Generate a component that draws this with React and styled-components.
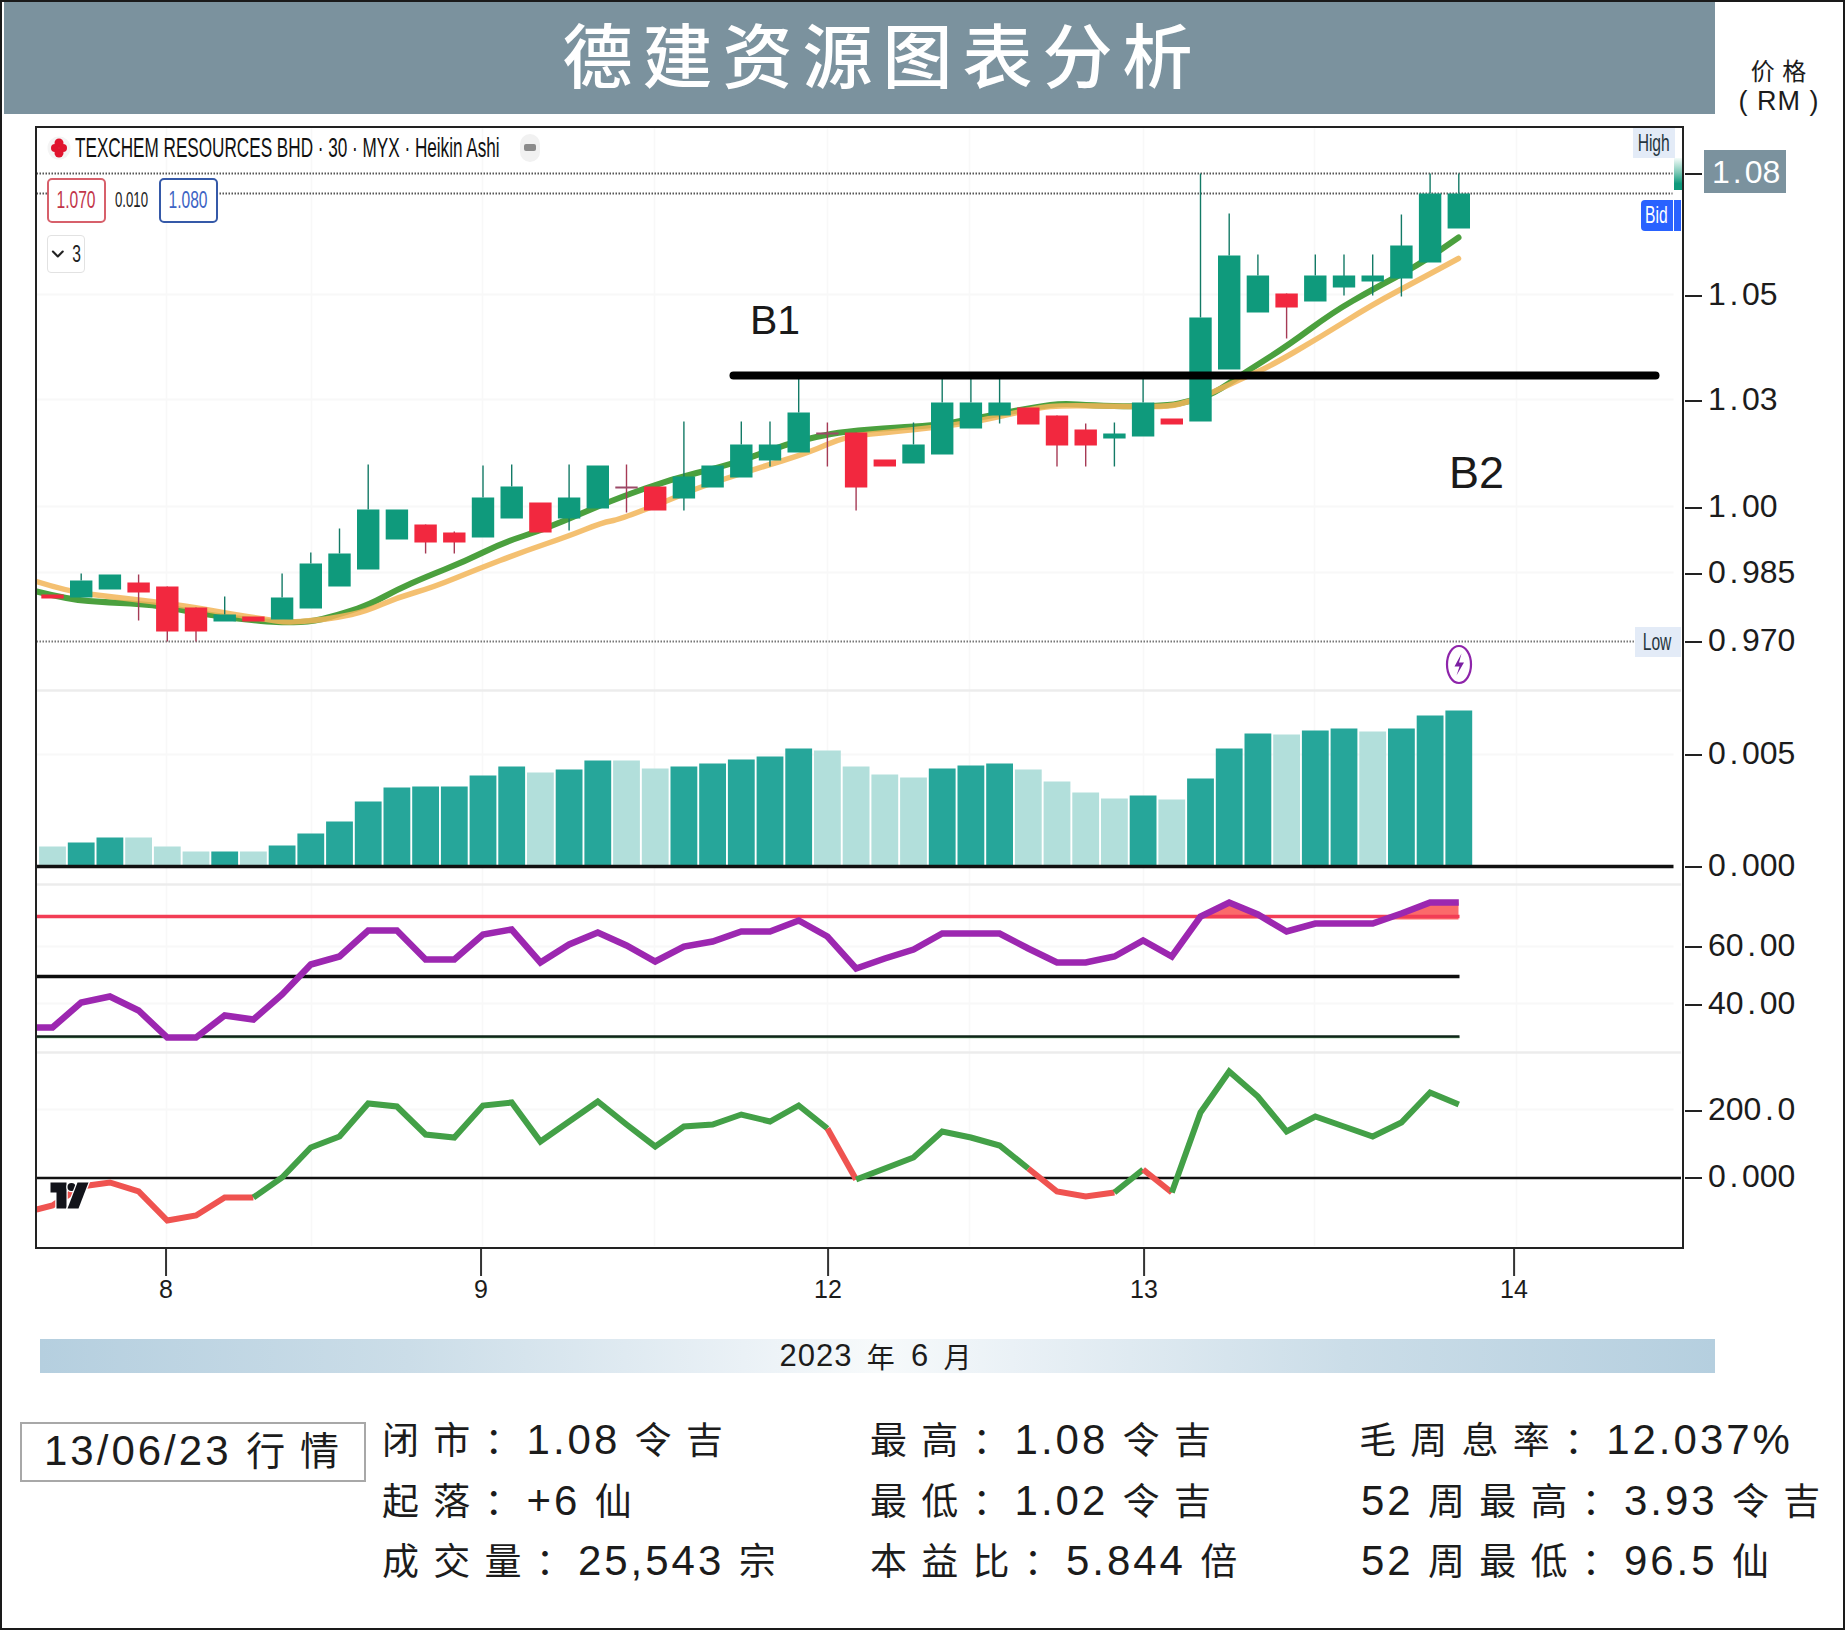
import React from 'react'
import styled, { createGlobalStyle } from 'styled-components'
import { ChevronDown } from 'lucide-react'

const FONT = '"Liberation Sans", "Noto Sans CJK SC", sans-serif'
const CJK = '"Noto Sans CJK SC", "Liberation Sans", sans-serif'
const INK = '#1c1c1c'
const SLATE = '#7b929e'

const GREEN = '#0f9a7c'
const RED = '#f2283f'
const VOL_DARK = '#26a69a'
const VOL_LIGHT = '#b2dfdb'

const GlobalStyle = createGlobalStyle`
  html, body {
    margin: 0;
    padding: 0;
    background: #fff;
  }
`

const Page = styled.div`
  width: 1845px;
  height: 1630px;
  box-sizing: border-box;
  border: 2px solid #1a1a1a;
  overflow: hidden;
  background: #fff;
  color: ${INK};
  font-family: ${FONT};
`

const Header = styled.header`
  display: flex;
  height: 112px;
`

const Title = styled.h1`
  width: 1711px;
  margin: 0 0 0 2px;
  padding-left: 46px;
  box-sizing: border-box;
  background: ${SLATE};
  color: #fff;
  font-family: ${CJK};
  font-size: 70px;
  font-weight: 500;
  letter-spacing: 10px;
  line-height: 102px;
  text-align: center;
`

const PriceUnit = styled.div`
  flex: 1;
  display: flex;
  flex-direction: column;
  align-items: center;
  padding-top: 53px;
  font-size: 27px;
  line-height: 32px;
  letter-spacing: 1px;
  white-space: pre;
`

const UnitCjk = styled.span`
  font-family: ${CJK};
  font-size: 24px;
  line-height: 30px;
`

const ChartRow = styled.div`
  display: flex;
  height: 1123px;
  margin-top: 12px;
  padding-left: 33px;
`

const Frame = styled.div`
  position: relative;
  width: 1649px;
  height: 1123px;
  box-sizing: border-box;
  border: 2.5px solid #222;
  background: #fff;
`

const ChartSvg = styled.svg`
  display: block;
`

const Legend = styled.div`
  position: absolute;
  left: 9.5px;
  top: 3.5px;
  display: flex;
  flex-direction: column;
  align-items: flex-start;
  gap: 13px;
`

const LegendTitle = styled.div`
  display: flex;
  align-items: center;
  height: 32px;
  gap: 4px;
`

const LegendIcon = styled.svg`
  width: 24px;
  height: 28px;
`

const Narrow = styled.span`
  display: inline-block;
  flex: none;
  font-size: ${(p) => p.$size || 24}px;
  transform: scaleX(${(p) => p.$scale || 0.65});
  transform-origin: ${(p) => (p.$left ? 'left' : 'center')};
  white-space: nowrap;
`

const TitleSlot = styled.div`
  width: 425px;
  margin-right: 16px;
  color: #111;
`

const MorePill = styled.div`
  display: flex;
  align-items: center;
  justify-content: center;
  width: 20px;
  height: 28px;
  border-radius: 10px;
  background: #f1f1f1;
  &::after {
    content: '';
    width: 12px;
    height: 7px;
    border-radius: 2px;
    background: #8b8b8b;
  }
`

const ValuesRow = styled.div`
  display: flex;
  align-items: center;
  margin-top: 1px;
  background: #fff;
`

const ValueBox = styled.div`
  display: flex;
  align-items: center;
  justify-content: center;
  width: 59px;
  height: 45px;
  box-sizing: border-box;
  overflow: hidden;
  border: 2px solid ${(p) => p.$edge};
  border-radius: 5px;
  background: #fff;
  color: ${(p) => p.$tone};
`

const ValueChange = styled.div`
  display: flex;
  justify-content: center;
  width: 53px;
  color: #222;
`

const FoldButton = styled.div`
  display: flex;
  align-items: center;
  justify-content: center;
  gap: 3px;
  width: 38px;
  height: 38px;
  margin-top: -1px;
  box-sizing: border-box;
  border: 1.5px solid #e2e2e2;
  border-radius: 4px;
  background: #fff;
  color: #222;
`

const PriceFlag = styled.div`
  position: absolute;
  left: ${(p) => p.$x}px;
  top: ${(p) => p.$y}px;
  display: flex;
  align-items: center;
  justify-content: center;
  width: ${(p) => p.$w}px;
  height: 30px;
  background: #e3ebf7;
  color: #263640;
`

const LastBar = styled.div`
  position: absolute;
  left: 1636.5px;
  top: 29.5px;
  width: 8px;
  height: 32px;
  background: linear-gradient(180deg, #f4fbf9 0%, #7cc9b6 45%, ${GREEN} 80%);
`

const BidTag = styled.div`
  position: absolute;
  left: 1603.5px;
  top: 71.5px;
  display: flex;
  gap: 1.5px;
  height: 31px;
`

const BidLabel = styled.div`
  display: flex;
  align-items: center;
  justify-content: center;
  width: 32px;
  border-radius: 4px 0 0 4px;
  background: #2962ff;
  color: #fff;
`

const BidStub = styled.div`
  width: 7px;
  background: #2962ff;
`

const Annotation = styled.div`
  position: absolute;
  left: ${(p) => p.$x}px;
  top: ${(p) => p.$y}px;
  font-size: ${(p) => p.$size}px;
  line-height: 1;
  color: #1a1a1a;
`

const Axis = styled.div`
  position: relative;
  flex: 1;
`

const Tick = styled.div`
  position: absolute;
  left: 1px;
  top: ${(p) => p.$y - 126}px;
  display: flex;
  align-items: center;
  gap: ${(p) => (p.$active ? 2 : 6)}px;
  height: 0;
`

const TickDash = styled.i`
  width: 17px;
  height: 2.5px;
  background: #222;
`

const TickLabel = styled.span`
  display: inline-block;
  margin-bottom: ${(p) => (p.$active ? 6 : 4)}px;
  padding: ${(p) => (p.$active ? '6px 6px 5px 8px' : 0)};
  background: ${(p) => (p.$active ? SLATE : 'transparent')};
  color: ${(p) => (p.$active ? '#fff' : INK)};
  font-size: 32px;
  line-height: 32px;
  white-space: nowrap;
`

const TickDot = styled.span`
  margin: 0 ${(p) => (p.$active ? 3 : 3.6)}px;
`

const DateAxis = styled.div`
  position: relative;
  height: 90px;
`

const DateTick = styled.div`
  position: absolute;
  left: ${(p) => p.$x - 2}px;
  top: 0;
  display: flex;
  flex-direction: column;
  align-items: center;
  transform: translateX(-50%);
  font-size: 25px;
  line-height: 26px;
  &::before {
    content: '';
    width: 2px;
    height: 27px;
    background: #333;
  }
`

const MonthBar = styled.div`
  display: flex;
  align-items: center;
  justify-content: center;
  width: 1675px;
  height: 34px;
  margin-left: 38px;
  padding-right: 8px;
  box-sizing: border-box;
  background: linear-gradient(
    90deg,
    #b5cfdf 0%,
    #cbdde8 22%,
    #eaf1f6 42%,
    #f7fafb 50%,
    #eaf1f6 58%,
    #cbdde8 78%,
    #b5cfdf 100%
  );
  font-family: ${CJK};
  font-size: 28px;
  letter-spacing: 2px;
  white-space: pre;
`

const MonthNum = styled.span`
  margin: 0 6px;
  font-family: ${FONT};
  font-size: 31px;
  letter-spacing: 1px;
`

const StatsRow = styled.div`
  display: grid;
  grid-template-columns: 362px 488px 489px 1fr;
  margin-top: 35px;
  padding-left: 18px;
`

const DateBadge = styled.div`
  width: 346px;
  height: 60px;
  margin-top: 14px;
  box-sizing: border-box;
  padding-left: 20px;
  border: 2px solid #a8a8a8;
  font-family: ${CJK};
  font-size: 39px;
  line-height: 48px;
  letter-spacing: 3px;
  white-space: pre;
`

const StatColumn = styled.div`
  display: flex;
  flex-direction: column;
`

const StatLine = styled.div`
  height: 60.5px;
  font-family: ${CJK};
  font-size: 37px;
  line-height: 60px;
  letter-spacing: 3px;
  white-space: pre;
`

const Latin = styled.span`
  margin: 0 3px 0 2px;
  font-family: ${FONT};
  font-size: 42px;
`

const withLatin = (text) =>
  text.split(/([0-9.,+%/]+)/).map((part, i) =>
    i % 2 ? <Latin key={i}>{part}</Latin> : part
  )

const X0 = 53
const STEP = 28.7
const xAt = (i) => X0 + STEP * i

// up, bodyTop, bodyBottom, wickTop, wickBottom
const CANDLES = [
  [0, 595, 599],
  [1, 581, 598, 574],
  [1, 575, 590],
  [0, 583, 593, 575, 621],
  [0, 587, 632, 587, 642],
  [0, 608, 632, 608, 642],
  [1, 615, 622, 597],
  [0, 617, 622],
  [1, 598, 620, 574],
  [1, 564, 609, 553],
  [1, 554, 587, 529],
  [1, 510, 570, 465],
  [1, 510, 540],
  [0, 525, 543, 525, 554],
  [0, 533, 543, 532, 554],
  [1, 498, 538, 466],
  [1, 487, 519, 465],
  [0, 503, 533],
  [1, 498, 519, 465, 531],
  [1, 466, 509],
  [2, 487, 489, 465, 513],
  [0, 487, 511],
  [1, 477, 499, 422, 511],
  [1, 466, 488],
  [1, 445, 478, 422],
  [1, 445, 461, 422, 467],
  [1, 413, 453, 379],
  [2, 433, 435, 423, 467],
  [0, 433, 488, 433, 511],
  [0, 460, 467],
  [1, 445, 464, 423],
  [1, 403, 455, 379],
  [1, 403, 429, 379],
  [1, 403, 416, 379, 424],
  [0, 408, 425],
  [0, 416, 446, 416, 467],
  [0, 430, 446, 424, 467],
  [1, 434, 439, 423, 467],
  [1, 403, 437, 379],
  [0, 419, 425],
  [1, 318, 422, 174],
  [1, 256, 370, 214],
  [1, 276, 313, 255],
  [0, 294, 308, 294, 339],
  [1, 276, 302, 255],
  [1, 276, 288, 255, 296],
  [1, 276, 282, 255, 296],
  [1, 246, 279, 215, 297],
  [1, 194, 263, 174],
  [1, 194, 229, 174],
]

const MA_FAST = [
  [37, 592], [69, 600], [109, 603], [153, 605], [196, 613], [228, 618], [267, 622],
  [287, 623], [315, 622], [346, 613], [370, 605], [398, 590], [425, 578], [465, 562],
  [504, 543], [544, 530], [584, 513], [620, 498], [671, 480], [723, 467], [754, 457],
  [786, 445], [818, 437], [845, 432], [897, 428], [932, 426], [960, 422], [996, 415],
  [1039, 407], [1063, 404], [1094, 406], [1134, 407], [1170, 406], [1189, 402],
  [1213, 395], [1247, 372], [1287, 347], [1333, 313], [1373, 290], [1420, 265], [1459, 238],
]

const MA_SLOW = [
  [37, 582], [69, 592], [109, 597], [153, 602], [196, 608], [228, 614], [267, 620],
  [287, 623], [315, 621], [338, 618], [366, 612], [398, 598], [433, 588], [477, 570],
  [524, 552], [568, 537], [603, 523], [620, 520], [671, 500], [699, 488], [754, 470],
  [810, 453], [845, 437], [897, 432], [960, 425], [996, 418], [1039, 408], [1063, 406],
  [1134, 407], [1170, 407], [1190, 402], [1213, 393], [1247, 377], [1270, 367],
  [1320, 338], [1373, 305], [1420, 280], [1459, 259],
]

// up, top
const VOLUME = [
  [0, 847], [1, 843], [1, 838], [0, 838], [0, 847], [0, 852], [1, 852], [0, 852], [1, 846], [1, 834],
  [1, 822], [1, 802], [1, 788], [1, 787], [1, 787], [1, 776], [1, 767], [0, 773], [1, 770], [1, 761],
  [0, 761], [0, 769], [1, 767], [1, 764], [1, 760], [1, 757], [1, 749], [0, 751], [0, 767], [0, 775],
  [0, 778], [1, 769], [1, 766], [1, 764], [0, 770], [0, 782], [0, 793], [0, 799], [1, 796], [0, 800],
  [1, 779], [1, 749], [1, 734], [0, 735], [1, 731], [1, 729], [0, 732], [1, 729], [1, 716], [1, 711],
]

const RSI = [
  1028, 1003, 997, 1011, 1038, 1038, 1016, 1020, 995, 965,
  957, 931, 931, 960, 960, 935, 930, 963, 945, 933,
  946, 962, 947, 942, 932, 932, 921, 937, 969, 959,
  950, 934, 934, 934, 949, 963, 963, 957, 941, 957,
  917, 903, 915, 932, 924, 924, 924, 914, 903, 903,
]

const CCI = [
  1206, 1187, 1183, 1192, 1221, 1216, 1198, 1198, 1178, 1148,
  1137, 1104, 1107, 1135, 1138, 1106, 1103, 1142, 1122, 1102,
  1125, 1147, 1127, 1125, 1115, 1122, 1106, 1129, 1180, 1169,
  1158, 1132, 1138, 1146, 1169, 1192, 1197, 1193, 1170, 1193,
  1113, 1072, 1097, 1132, 1117, 1127, 1137, 1123, 1093, 1105,
]

// from, to (candle index) and colour of each stretch of the CCI line
const CCI_PARTS = [
  [0, 7, '#ef5350'],
  [7, 27, '#43a047'],
  [27, 28, '#ef5350'],
  [28, 34, '#43a047'],
  [34, 37, '#ef5350'],
  [37, 38, '#43a047'],
  [38, 39, '#ef5350'],
  [39, 49, '#43a047'],
]

const GRID_X = [167, 312, 483, 655, 828, 970, 1144, 1315, 1517]
const GRID_Y = [295, 400, 507, 573, 755, 947, 1004, 1110]
const PRICE_TICKS = [
  ['1.05', 296], ['1.03', 401], ['1.00', 508], ['0.985', 574], ['0.970', 642],
  ['0.005', 755], ['0.000', 867], ['60.00', 947], ['40.00', 1005], ['200.0', 1111], ['0.000', 1178],
]
const DATE_TICKS = [['8', 166], ['9', 481], ['12', 828], ['13', 1144], ['14', 1514]]
const STATS = [
  ['闭 市 ：1.08 令 吉', '起 落 ：+6 仙', '成 交 量 ：25,543 宗'],
  ['最 高 ：1.08 令 吉', '最 低 ：1.02 令 吉', '本 益 比 ：5.844 倍'],
  ['毛 周 息 率 ：12.037%', '52 周 最 高 ：3.93 令 吉', '52 周 最 低 ：96.5 仙'],
]

const points = (list) => list.map((p) => p.join(',')).join(' ')

// moving averages are curves: run through the midpoints of the sampled points
const smoothPath = (list) => {
  let d = `M${list[0][0]} ${list[0][1]}`
  for (let i = 1; i < list.length - 1; i++) {
    const [x, y] = list[i]
    const [nx, ny] = list[i + 1]
    d += ` Q${x} ${y} ${(x + nx) / 2} ${(y + ny) / 2}`
  }
  const last = list[list.length - 1]
  return `${d} L${last[0]} ${last[1]}`
}

const rsiLine = [[37, 1028], ...RSI.map((y, i) => [xAt(i), y])]
const cciPoints = (from, to) => {
  const list = CCI.slice(from, to + 1).map((y, i) => [xAt(from + i), y])
  return from === 0 ? [[37, 1210], ...list] : list
}

const Candle = ({ data, index }) => {
  const [up, top, bottom, wickTop, wickBottom] = data
  const x = xAt(index)
  const fill = up === 1 ? GREEN : up === 2 ? '#9c4a68' : RED
  const wick = up === 1 ? '#137a66' : '#a63a55'
  return (
    <g>
      {wickTop !== undefined && (
        <line x1={x} x2={x} y1={wickTop} y2={wickBottom ?? top} stroke={wick} strokeWidth="1.4" />
      )}
      <rect x={x - 11.2} y={top} width="22.4" height={bottom - top} fill={fill} />
    </g>
  )
}

const Chart = () => (
  <ChartSvg width="1644" height="1118" viewBox="37.5 128.5 1644 1118">
    {GRID_X.map((x) => (
      <line key={x} x1={x} x2={x} y1="129" y2="1248" stroke="#f8f8f8" strokeWidth="1.5" />
    ))}
    {GRID_Y.map((y) => (
      <line key={y} x1="37" x2="1674" y1={y} y2={y} stroke="#f8f8f8" strokeWidth="2" />
    ))}
    {[691, 885, 1053].map((y) => (
      <line key={y} x1="37" x2="1682" y1={y} y2={y} stroke="#ececec" strokeWidth="2.5" />
    ))}

    {[174, 194].map((y) => (
      <line key={y} x1="37" x2="1673" y1={y} y2={y} stroke="#555" strokeWidth="1.8" strokeDasharray="1.5 1.5" />
    ))}
    <line x1="37" x2="1635" y1="642" y2="642" stroke="#777" strokeWidth="1.8" strokeDasharray="1.5 1.5" />

    <path d={smoothPath(MA_FAST)} fill="none" stroke="#4ba03e" strokeWidth="6" strokeLinecap="round" />
    <path d={smoothPath(MA_SLOW)} fill="none" stroke="#f2b558" strokeOpacity="0.85" strokeWidth="5.5" strokeLinecap="round" />
    {CANDLES.map((c, i) => (
      <Candle key={i} data={c} index={i} />
    ))}
    <line x1="734" x2="1656" y1="376" y2="376" stroke="#000" strokeWidth="8" strokeLinecap="round" />

    <g>
      <ellipse cx="1459.5" cy="665" rx="12" ry="18.5" fill="#fff" stroke="#8e24aa" strokeWidth="2.2" />
      <path d="M1462 654 L1455 667 H1460 L1457 676 L1464.5 663 H1459.5 Z" fill="#7b1fa2" />
    </g>

    {VOLUME.map(([up, top], i) => (
      <rect key={i} x={xAt(i) - 13.4} y={top} width="26.8" height={866 - top} fill={up ? VOL_DARK : VOL_LIGHT} />
    ))}
    <line x1="37" x2="1674" y1="867" y2="867" stroke="#111" strokeWidth="3.5" />

    <polygon points="1200,917 1229,903 1258,915 1262,919 1200,919" fill="#fb6a6a" />
    <polygon points="1393,917 1402,914 1430,903 1459,903 1459,920 1393,920" fill="#fb6a6a" />
    <line x1="37" x2="1460" y1="917" y2="917" stroke="#f23d55" strokeWidth="3.5" />
    <line x1="37" x2="1460" y1="977" y2="977" stroke="#0c0c0c" strokeWidth="3.5" />
    <line x1="37" x2="1460" y1="1038" y2="1038" stroke="#7ab97e" strokeWidth="1.5" />
    <line x1="37" x2="1460" y1="1037" y2="1037" stroke="#10261a" strokeWidth="2.5" />
    <polyline points={points(rsiLine)} fill="none" stroke="#9c27b0" strokeWidth="6.5" strokeLinejoin="miter" />

    <line x1="37" x2="1682" y1="1178.5" y2="1178.5" stroke="#111" strokeWidth="2.5" />
    {CCI_PARTS.map(([from, to, color]) => (
      <polyline key={from} points={points(cciPoints(from, to))} fill="none" stroke={color} strokeWidth="6" strokeLinejoin="miter" />
    ))}

    <g fill="#12131a" stroke="#fff" strokeWidth="2.5" paintOrder="stroke">
      <path d="M51 1183 H67 V1209 H57 V1193 H51 Z" />
      <circle cx="72" cy="1187.5" r="4" />
      <path d="M78 1183 H89 L79 1209 H68 Z" />
    </g>
  </ChartSvg>
)

const PriceTick = ({ value, y, active }) => {
  const [whole, decimals] = value.split('.')
  return (
    <Tick $y={y} $active={active}>
      <TickDash />
      <TickLabel $active={active}>
        {whole}
        <TickDot $active={active}>.</TickDot>
        {decimals}
      </TickLabel>
    </Tick>
  )
}

const App = () => (
  <Page>
    <GlobalStyle />
    <Header>
      <Title>德建资源图表分析</Title>
      <PriceUnit>
        <UnitCjk>价 格</UnitCjk>
        <span>( RM )</span>
      </PriceUnit>
    </Header>

    <ChartRow>
      <Frame>
        <Chart />
        <Legend>
          <LegendTitle>
            <LegendIcon viewBox="0 0 24 28">
              <circle cx="12" cy="14" r="11.5" fill="#f4f4f4" />
              <circle cx="12" cy="9" r="4.5" fill="#e0142e" />
              <circle cx="12" cy="19" r="4.5" fill="#e0142e" />
              <circle cx="8" cy="14" r="4" fill="#e0142e" />
              <circle cx="16" cy="14" r="4" fill="#e0142e" />
            </LegendIcon>
            <TitleSlot>
              <Narrow $size={28} $scale={0.612} $left>
                TEXCHEM RESOURCES BHD · 30 · MYX · Heikin Ashi
              </Narrow>
            </TitleSlot>
            <MorePill />
          </LegendTitle>
          <ValuesRow>
            <ValueBox $edge="#d7606b" $tone="#c2364a">
              <Narrow>1.070</Narrow>
            </ValueBox>
            <ValueChange>
              <Narrow $size={22} $scale={0.6}>0.010</Narrow>
            </ValueChange>
            <ValueBox $edge="#3559a8" $tone="#3d64c4">
              <Narrow>1.080</Narrow>
            </ValueBox>
          </ValuesRow>
          <FoldButton>
            <ChevronDown size={20} strokeWidth={2.6} />
            <Narrow>3</Narrow>
          </FoldButton>
        </Legend>

        <PriceFlag $x={1595.5} $y={-0.5} $w={42}>
          <Narrow>High</Narrow>
        </PriceFlag>
        <LastBar />
        <BidTag>
          <BidLabel>
            <Narrow>Bid</Narrow>
          </BidLabel>
          <BidStub />
        </BidTag>
        <PriceFlag $x={1597.5} $y={498.5} $w={46}>
          <Narrow>Low</Narrow>
        </PriceFlag>

        <Annotation $x={713} $y={172} $size={41}>B1</Annotation>
        <Annotation $x={1412} $y={322} $size={45}>B2</Annotation>
      </Frame>

      <Axis>
        <PriceTick value="1.08" y={174} active />
        {PRICE_TICKS.map(([value, y]) => (
          <PriceTick key={value + y} value={value} y={y} />
        ))}
      </Axis>
    </ChartRow>

    <DateAxis>
      {DATE_TICKS.map(([label, x]) => (
        <DateTick key={label} $x={x}>{label}</DateTick>
      ))}
    </DateAxis>

    <MonthBar>
      <MonthNum>2023</MonthNum> 年 <MonthNum>6</MonthNum> 月
    </MonthBar>

    <StatsRow>
      <DateBadge>{withLatin('13/06/23 行 情')}</DateBadge>
      {STATS.map((column) => (
        <StatColumn key={column[0]}>
          {column.map((line) => (
            <StatLine key={line}>{withLatin(line)}</StatLine>
          ))}
        </StatColumn>
      ))}
    </StatsRow>
  </Page>
)

export default App
